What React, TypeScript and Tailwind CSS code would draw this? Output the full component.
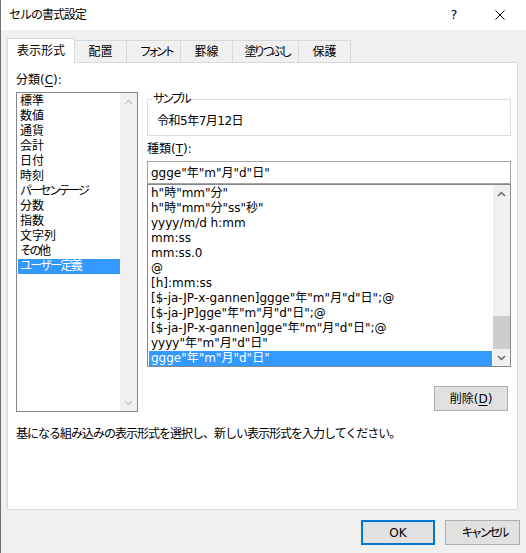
import React from 'react';

const UpChevron = ({ color }: { color: string }) => (
  <svg width="9" height="6" viewBox="0 0 9 6">
    <path d="M1 5L4.5 1.5L8 5" stroke={color} strokeWidth="1.4" fill="none" />
  </svg>
);
const DownChevron = ({ color }: { color: string }) => (
  <svg width="9" height="6" viewBox="0 0 9 6">
    <path d="M1 1L4.5 4.5L8 1" stroke={color} strokeWidth="1.4" fill="none" />
  </svg>
);

const categories = [
  { label: '標準', tr: '' },
  { label: '数値', tr: '' },
  { label: '通貨', tr: '' },
  { label: '会計', tr: '' },
  { label: '日付', tr: '' },
  { label: '時刻', tr: '' },
  { label: 'パーセンテージ', tr: 'tracking-[-2.3px]' },
  { label: '分数', tr: '' },
  { label: '指数', tr: '' },
  { label: '文字列', tr: '' },
  { label: 'その他', tr: 'tracking-[-2.5px]' },
  { label: 'ユーザー定義', tr: 'tracking-[-1.8px]' },
];

const formats = [
  'h"時"mm"分"',
  'h"時"mm"分"ss"秒"',
  'yyyy/m/d h:mm',
  'mm:ss',
  'mm:ss.0',
  '@',
  '[h]:mm:ss',
  '[$-ja-JP-x-gannen]ggge"年"m"月"d"日";@',
  '[$-ja-JP]gge"年"m"月"d"日";@',
  '[$-ja-JP-x-gannen]gge"年"m"月"d"日";@',
  'yyyy"年"m"月"d"日"',
  'ggge"年"m"月"d"日"',
];

const tabs = [
  { label: '表示形式', w: 'w-[68px]', tr: '' },
  { label: '配置', w: 'w-[53px]', tr: '' },
  { label: 'フォント', w: 'w-[55px]', tr: 'tracking-[-4px] pl-[4px]' },
  { label: '罫線', w: 'w-[53px]', tr: '' },
  { label: '塗りつぶし', w: 'w-[67px]', tr: 'tracking-[-3px] pl-[3px]' },
  { label: '保護', w: 'w-[53px]', tr: '' },
];

export default function App() {
  return (
    <div className="w-[526px] h-[553px] bg-[#f0f0f0] border-l border-[#6e6e6e] overflow-hidden text-[12px] text-black font-[family-name:'DejaVu_Sans','Noto_Sans_CJK_JP',sans-serif]">
      {/* title bar */}
      <div className="h-[30px] bg-white flex items-center pl-[8px] pr-[3px]">
        <span className="leading-[16px] tracking-[-1px]">セルの書式設定</span>
        <div className="ml-auto flex items-center">
          <div className="w-[46px] h-[30px] flex items-center justify-center text-[13px]">?</div>
          <div className="w-[46px] h-[30px] flex items-center justify-center">
            <svg width="10" height="10" viewBox="0 0 10 10">
              <path d="M0.5 0.5L9.5 9.5M9.5 0.5L0.5 9.5" stroke="#000" strokeWidth="1" fill="none" />
            </svg>
          </div>
        </div>
      </div>

      {/* tabs */}
      <div className="mt-[8px] pl-[6px] h-[24px] flex items-end">
        {tabs.map((t, i) =>
          i === 0 ? (
            <div
              key={t.label}
              className={`${t.w} h-[25px] mb-[-1px] relative z-10 bg-white border-l border-t border-r border-[#d9d9d9] flex items-center justify-center leading-[16px]`}
            >
              {t.label}
            </div>
          ) : (
            <div
              key={t.label}
              className={`${t.w} h-[22px] ml-[-1px] bg-[#f0f0f0] border-l border-t border-r border-[#d9d9d9] flex items-center justify-center leading-[16px]`}
            >
              <span className={t.tr}>{t.label}</span>
            </div>
          )
        )}
      </div>

      {/* panel */}
      <div className="ml-[6px] w-[511px] h-[448px] bg-white border border-[#d9d9d9] pl-[8px] pt-[9px]">
        <div className="flex gap-[9px]">
          {/* left column */}
          <div className="w-[122px] flex flex-col">
            <div className="h-[17px] leading-[17px]">
              分類(<span className="underline underline-offset-2">C</span>):
            </div>
            <div className="mt-[3px] h-[320px] border border-[#828790] flex">
              <div className="flex-1 pt-[1px] pl-[1px]">
                {categories.map((c, i) => (
                  <div
                    key={c.label}
                    className={`h-[15px] leading-[15px] pl-[2px] whitespace-nowrap ${c.tr} ${i === categories.length - 1 ? 'bg-[#3399ff] text-white' : ''}`}
                  >
                    {c.label}
                  </div>
                ))}
              </div>
              <div className="w-[17px] bg-[#f0f0f0] flex flex-col justify-between">
                <div className="h-[17px] flex items-center justify-center">
                  <UpChevron color="#c8c8c8" />
                </div>
                <div className="h-[17px] flex items-center justify-center">
                  <DownChevron color="#c8c8c8" />
                </div>
              </div>
            </div>
          </div>

          {/* right column */}
          <div className="w-[364px] flex flex-col">
            <fieldset className="mt-[19px] h-[45px] border border-[#dcdcdc] m-0 p-0 min-w-0">
              <legend className="ml-[4px] px-[1px] leading-[16px] tracking-[-3px]">サンプル</legend>
              <div className="pl-[9px] pt-[6px] leading-[16px] tracking-[-0.5px]">令和5年7月12日</div>
            </fieldset>
            <div className="mt-[5px] h-[16px] leading-[16px]">
              種類(<span className="underline underline-offset-2">T</span>):
            </div>
            <div className="mt-[4px] h-[23px] border border-[#a5a5a5] pl-[3px] flex items-center leading-[16px] whitespace-nowrap">
              {'ggge"年"m"月"d"日"'}
            </div>
            <div className="h-[183px] border border-[#828790] flex">
              <div className="flex-1 pt-[1px] px-[1px]">
                {formats.map((f, i) => (
                  <div
                    key={f}
                    className={`h-[15px] leading-[15px] pl-[2px] whitespace-nowrap ${i === formats.length - 1 ? 'bg-[#3399ff] text-white' : ''}`}
                  >
                    {f}
                  </div>
                ))}
              </div>
              <div className="w-[17px] bg-[#f0f0f0] flex flex-col">
                <div className="h-[17px] flex items-center justify-center">
                  <UpChevron color="#606060" />
                </div>
                <div className="flex-1 flex flex-col justify-end">
                  <div className="h-[33px] bg-[#cdcdcd]" />
                </div>
                <div className="h-[17px] flex items-center justify-center">
                  <DownChevron color="#606060" />
                </div>
              </div>
            </div>
            <div className="mt-[19px] self-end mr-[3px] w-[74px] h-[25px] bg-[#e1e1e1] border border-[#adadad] flex items-center justify-center leading-[16px]">
              削除(<span className="underline underline-offset-2">D</span>)
            </div>
          </div>
        </div>
        <div className="mt-[14px] leading-[16px] whitespace-nowrap tracking-[-1px]">
          基になる組み込みの表示形式を選択し、新しい表示形式を入力してください。
        </div>
      </div>

      {/* footer buttons */}
      <div className="mt-[10px] pr-[6px] flex justify-end">
        <div className="w-[74px] h-[25px] bg-[#e1e1e1] border-2 border-[#0078d7] flex items-center justify-center leading-[16px]">
          OK
        </div>
        <div className="ml-[10px] w-[75px] h-[25px] bg-[#e1e1e1] border border-[#adadad] flex items-center justify-center leading-[16px]">
          <span className="tracking-[-3px] pl-[3px]">キャンセル</span>
        </div>
      </div>
    </div>
  );
}
